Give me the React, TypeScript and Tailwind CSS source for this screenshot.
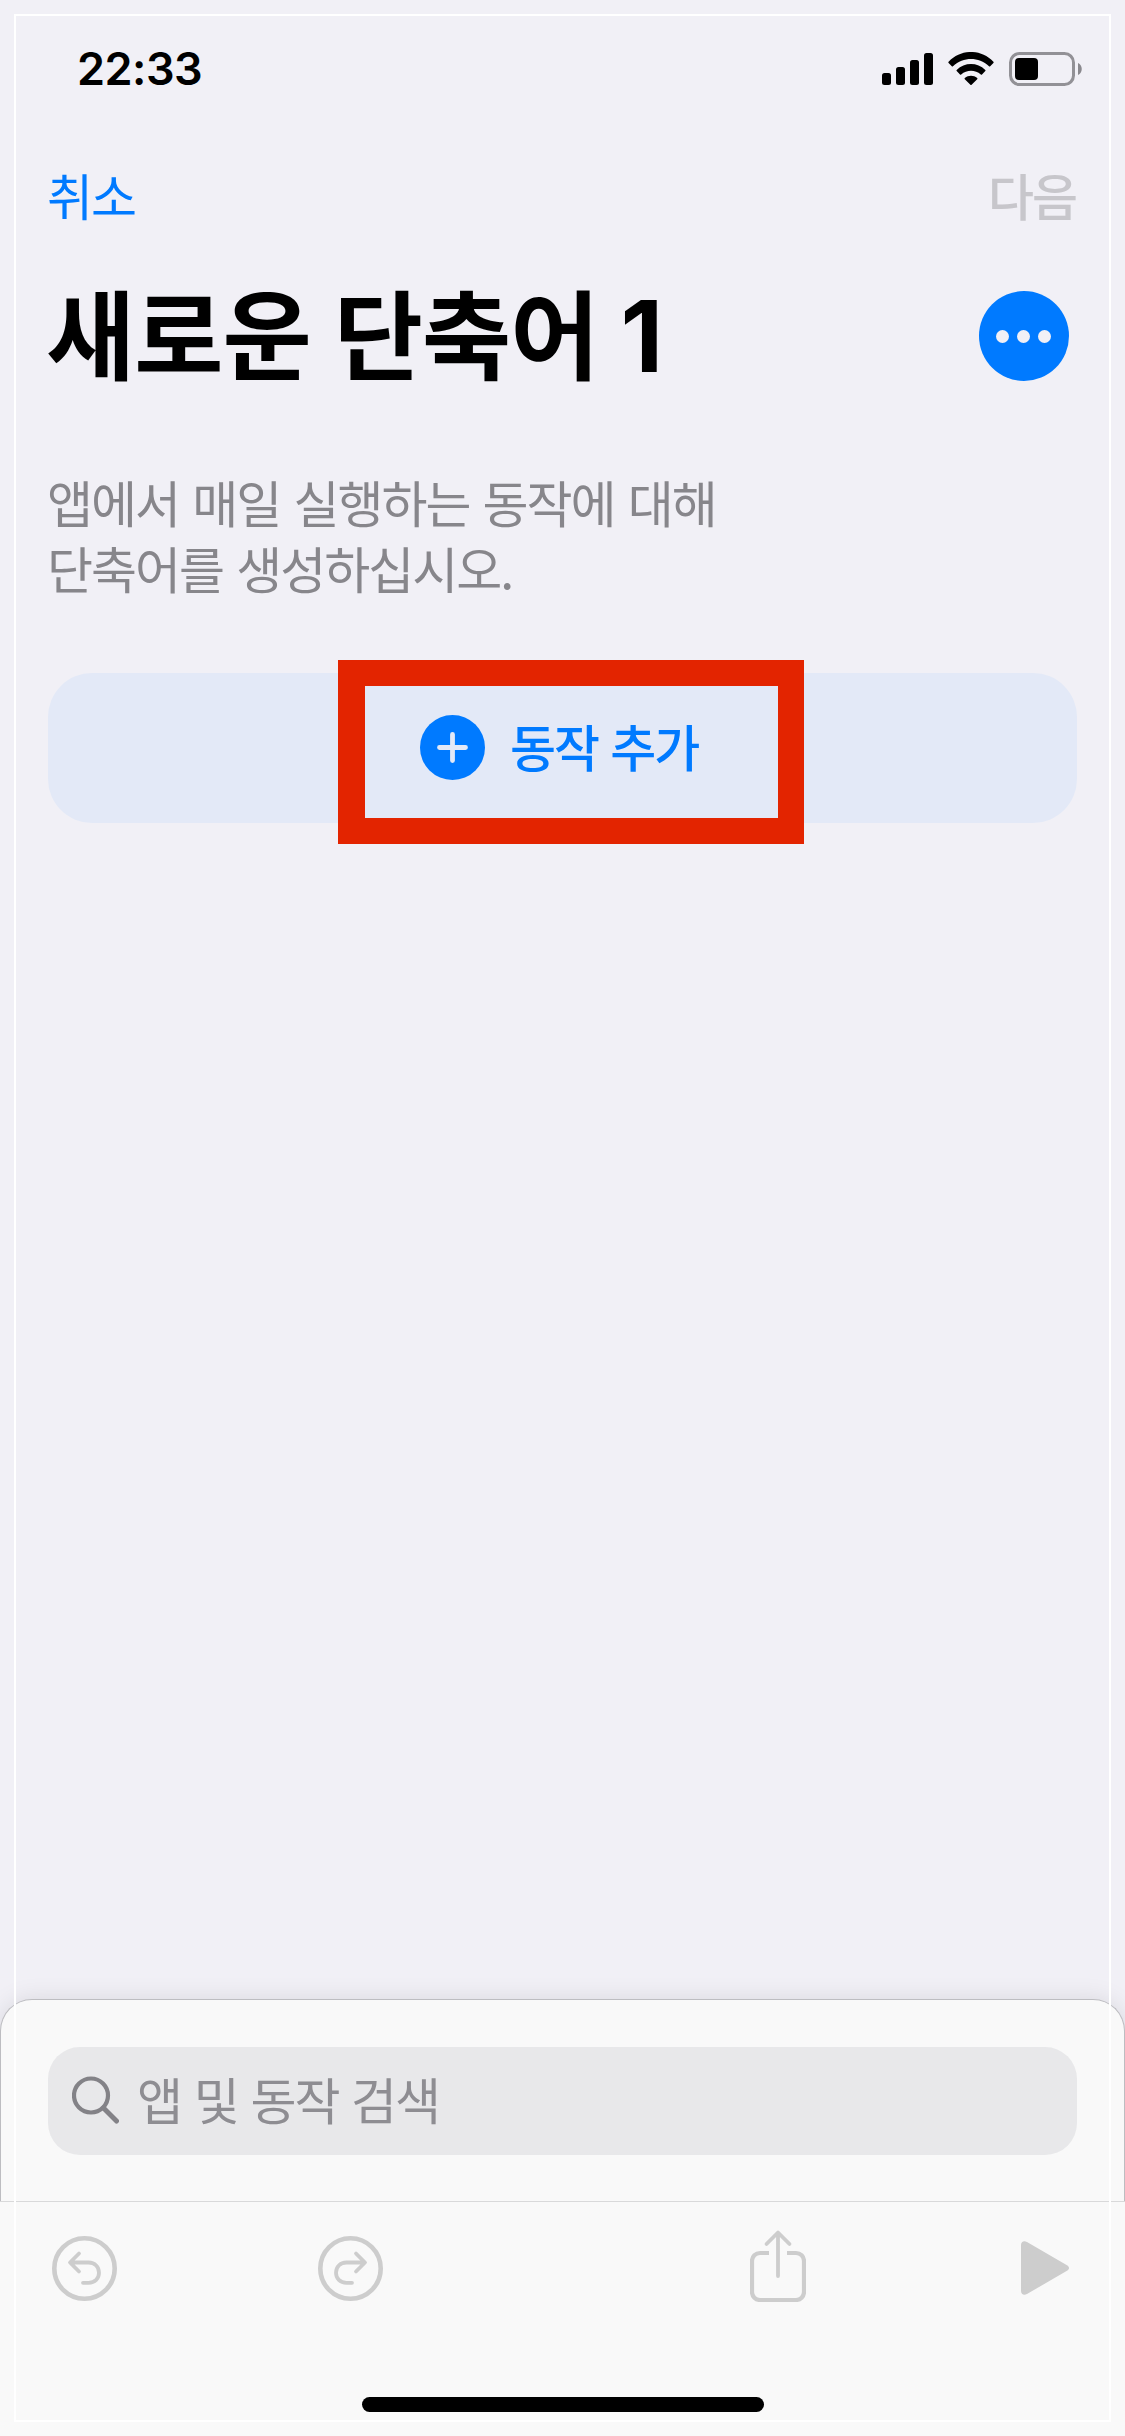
import type { ReactNode } from "react"

function StatusBar() {
  return (
    <header className="flex h-[132px] items-start justify-between pl-[77px] pr-[42px] pt-[52px]">
      <time className="font-['Inter',sans-serif] text-[45px] font-semibold leading-[33px] tracking-[-0.5px]">22:33</time>
      <div className="flex h-[34px] items-start">
        <svg width="51" height="33" viewBox="0 0 51 33" className="mt-px">
          <rect x="0" y="20" width="9" height="12" rx="2.5" />
          <rect x="14" y="14" width="9" height="18" rx="2.5" />
          <rect x="28" y="7" width="9" height="25" rx="2.5" />
          <rect x="42" y="0" width="9" height="32" rx="2.5" />
        </svg>
        <svg width="46" height="34" viewBox="0 0 46 34" className="ml-[15px]">
          <path d="M.6 9.700C13-3.300 33-3.300 45.400 9.700c.4.4.4.8 0 1.200l-3.200 3.300c-.4.4-.8.4-1.200 0C30.500 4.500 15.500 4.500 5 14.200c-.4.4-.8.4-1.200 0L.6 10.900c-.4-.4-.4-.8 0-1.200Z" />
          <path d="M8.700 17.900c8-7.900 20.600-7.900 28.600 0 .4.4.4.8 0 1.200l-3.300 3.300c-.4.4-.8.4-1.200 0-5.600-5-14-5-19.600 0-.4.4-.8.4-1.200 0l-3.300-3.300c-.4-.4-.4-.8 0-1.200Z" />
          <path d="M16.800 26.100c3.500-3.200 8.900-3.200 12.400 0 .4.4.4.8 0 1.200l-5.600 5.400c-.4.4-.8.4-1.200 0l-5.600-5.400c-.4-.4-.4-.8 0-1.200Z" />
        </svg>
        <svg width="74" height="34" viewBox="0 0 74 34" className="ml-[15px]">
          <rect x="1.500" y="1.500" width="63" height="31" rx="9" fill="none" stroke="#929196" strokeWidth="3" />
          <rect x="6" y="6" width="23" height="22" rx="4" />
          <path d="M69 11c5 2 5 10 0 12Z" fill="#8a898e" />
        </svg>
      </div>
    </header>
  )
}

function UndoIcon({ flipped = false }: { flipped?: boolean }) {
  return (
    <svg
      width="65"
      height="65"
      viewBox="0 0 65 65"
      fill="none"
      stroke="#cdcdcd"
      strokeLinecap="round"
      strokeLinejoin="round"
      className={flipped ? "-scale-x-100" : ""}
    >
      <circle cx="32.500" cy="32.500" r="30.200" strokeWidth="4.600" />
      <path d="M27 17.500 18 26.500l9 9M19 26.500h17.500c6.500 0 10.500 4.500 10.500 10.200S43 46.800 36.500 46.800H31" strokeWidth="3.800" />
    </svg>
  )
}

function ToolButton({ children, label }: { children: ReactNode; label: string }) {
  return (
    <button type="button" aria-label={label} disabled>
      {children}
    </button>
  )
}

export default function App() {
  return (
    <div className="relative flex h-[2436px] w-[1125px] flex-col overflow-hidden bg-[#f1f0f6] font-['Noto_Sans_CJK_KR',sans-serif] text-black">
      <StatusBar />

      <nav className="flex h-[132px] items-center justify-between pb-[9px] pl-[47px] pr-[49px] text-[50px] leading-[66px] tracking-[-2px]">
        <button type="button" className="text-[#007aff]">
          취소
        </button>
        <button type="button" className="font-medium text-[#c7c6cb]" disabled>
          다음
        </button>
      </nav>

      <main className="flex grow flex-col px-12">
        <div className="flex h-[144px] items-center justify-between pr-2">
          <h1 className="-ml-0.5 pb-[7px] text-[97px] font-bold leading-[120px] tracking-[-1px] [word-spacing:2px]">
            새로운 단축어 <span className="-ml-px font-['Inter',sans-serif] text-[99px]">1</span>
          </h1>
          <button
            type="button"
            aria-label="옵션"
            className="flex size-[90px] items-center justify-center gap-2 rounded-full bg-[#007aff] pr-px"
          >
            <span className="size-[13px] rounded-full bg-[#f1f0f6]" />
            <span className="size-[13px] rounded-full bg-[#f1f0f6]" />
            <span className="size-[13px] rounded-full bg-[#f1f0f6]" />
          </button>
        </div>

        <p className="-ml-px mt-[60px] text-[50px] leading-[66px] tracking-[-2px] text-[#87868b] [word-spacing:4px]">
          앱에서 매일 실행하는 동작에 대해
          <br />
          단축어를 생성하십시오.
        </p>

        <div className="relative mt-[73px] flex">
          <button
            type="button"
            className="flex h-[150px] grow items-center rounded-[44px] bg-[#e3e9f7] pb-px pl-[372px] text-[#007aff]"
          >
            <svg width="65" height="65" viewBox="0 0 65 65">
              <circle cx="32.500" cy="32.500" r="32.500" fill="#007aff" />
              <path d="M32.500 19.500v26M19.500 32.500h26" stroke="#e3e9f7" strokeWidth="4.800" strokeLinecap="round" />
            </svg>
            <span className="ml-[25px] pb-[5px] text-[50px] font-medium leading-[66px] tracking-[-2px] [word-spacing:3px]">
              동작 추가
            </span>
          </button>
          {/* highlight box over the button */}
          <div className="absolute -top-[13px] left-[290px] h-[184px] w-[466px] border-[26px] border-l-[27px] border-[#e32400]" />
        </div>
      </main>

      <section className="h-[202px] rounded-t-[32px] border border-b-0 border-[#bdbdc1] bg-[#f9f9f9] px-[47px] pt-[47px] shadow-[0_0_24px_rgba(0,0,0,0.1)]">
        <div className="flex h-[108px] items-center rounded-[32px] bg-[#e8e8ea] pl-6">
          <svg width="47" height="48" viewBox="0 0 47 48" fill="none" stroke="#838287" className="-mt-0.5">
            <circle cx="19" cy="19.500" r="17" strokeWidth="4.200" />
            <path d="m31.500 32 13 13" strokeWidth="5" strokeLinecap="round" />
          </svg>
          <span className="ml-[18px] pb-1.5 text-[50px] leading-[66px] tracking-[-2px] text-[#8e8d92] [word-spacing:3.500px]">
            앱 및 동작 검색
          </span>
        </div>
      </section>

      <footer className="relative flex h-[235px] flex-col items-center border-t border-[#d9d9da] bg-[#f9f9f9]">
        <div className="flex w-full items-start justify-between pl-[52px] pr-[56px] pt-[27px]">
          <div className="flex gap-[201px] pt-[7px]">
            <ToolButton label="실행 취소">
              <UndoIcon />
            </ToolButton>
            <ToolButton label="실행 복귀">
              <UndoIcon flipped />
            </ToolButton>
          </div>
          <div className="flex gap-[215px]">
            <ToolButton label="공유">
              <svg width="56" height="73" viewBox="0 0 56 73" fill="none" stroke="#cdcdcd" strokeWidth="4.200">
                <path d="M19 24H10a8 8 0 0 0-8 8v31a8 8 0 0 0 8 8h36a8 8 0 0 0 8-8V32a8 8 0 0 0-8-8h-9" />
                <path d="M28 47V4M16.500 15 28 3.500 39.500 15" strokeLinecap="round" strokeLinejoin="round" strokeWidth="3.800" />
              </svg>
            </ToolButton>
            <ToolButton label="실행">
              <svg width="48" height="73" viewBox="0 0 48 73" fill="#cdcdcd">
                <path d="M0 16c0-3.500 3-4.800 6-3l40 23.200c2.700 1.600 2.700 4 0 5.600L6 65c-3 1.800-6 .5-6-3Z" />
              </svg>
            </ToolButton>
          </div>
        </div>
        <div className="mt-[95px] h-[15px] w-[402px] rounded-full bg-black" />
      </footer>

      {/* thin white frame on top of the whole screen */}
      <div className="pointer-events-none absolute bottom-[14px] left-[14px] right-[14px] top-[14px] border-2 border-white" />
    </div>
  )
}
